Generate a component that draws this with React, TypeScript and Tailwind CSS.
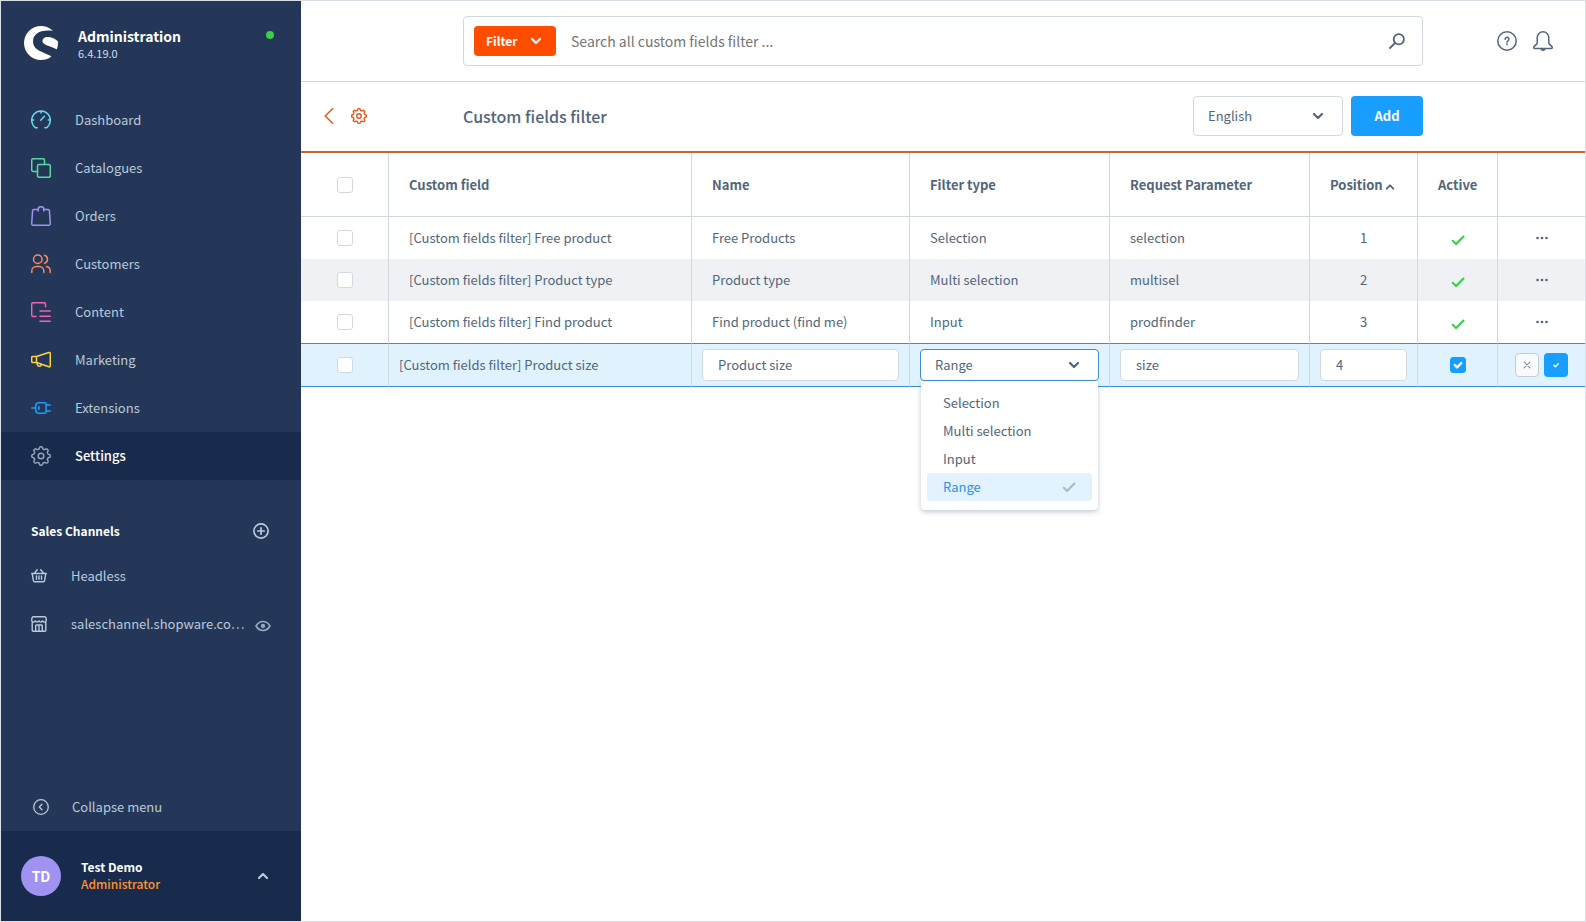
import React from 'react';
import { SiShopware } from 'react-icons/si';

type IconProps = { className?: string; children: React.ReactNode; box?: string; stroke?: number };

const Icon: React.FC<IconProps> = ({ className, children, box = '0 0 20 20', stroke = 1.5 }) => (
  <svg
    viewBox={box}
    fill="none"
    stroke="currentColor"
    strokeWidth={stroke}
    strokeLinecap="round"
    strokeLinejoin="round"
    className={className}
    aria-hidden="true"
  >
    {children}
  </svg>
);

// Cog outline with eight rounded teeth
const cogPoints = Array.from({ length: 128 }, (_, i) => {
  const angle = (i / 128) * Math.PI * 2;
  const radius = 8.2 + 1.05 * Math.tanh(2 * Math.cos(8 * angle));
  return `${(10 + radius * Math.sin(angle)).toFixed(2)},${(10 - radius * Math.cos(angle)).toFixed(2)}`;
}).join(' ');

const Gear = () => (
  <>
    <circle cx="10" cy="10" r="2.8" />
    <polygon points={cogPoints} />
  </>
);

const Chevron: React.FC<{ className?: string }> = ({ className }) => (
  <Icon box="0 0 12 12" stroke={2.2} className={className}>
    <path d="m2 4 4 4 4-4" />
  </Icon>
);

const CheckMark: React.FC<{ className?: string }> = ({ className }) => (
  <Icon box="0 0 12 12" stroke={1.8} className={className}>
    <path d="M1.500 6.700 4.300 9.500 10.700 3" />
  </Icon>
);

const navigation = [
  {
    label: 'Dashboard',
    color: 'text-[#6ed5f0]',
    icon: (
      <>
        <path d="M6.200 17.800H4.600a9.300 9.300 0 1 1 10.800 0h-1.600M10 .9v2M.9 10h1.800M17.300 10h1.800M9.700 10.200l3.800-4" />
      </>
    ),
  },
  {
    label: 'Catalogues',
    color: 'text-[#57d9a3]',
    icon: (
      <>
        <path d="M6.500 13.500H2.200A1.500 1.500 0 0 1 .7 12V2.200A1.500 1.500 0 0 1 2.200.7H12a1.500 1.500 0 0 1 1.500 1.500v4.300" />
        <rect x="6.500" y="6.500" width="12.800" height="12.800" rx="1.500" />
      </>
    ),
  },
  {
    label: 'Orders',
    color: 'text-[#a092f0]',
    icon: (
      <>
        <path d="M5.500 3.500H2.800q-1.100 0-1.200 1L.7 17.700q0 1.600 1.500 1.600h15.600q1.500 0 1.500-1.600L18.400 4.500q-.1-1-1.200-1h-2.700M7.200 5V3.500a2.800 2.800 0 0 1 5.600 0V5M5.500 3.500h1.700M12.800 3.500h1.700" />
      </>
    ),
  },
  {
    label: 'Customers',
    color: 'text-[#f88962]',
    icon: (
      <>
        <circle cx="6.800" cy="5.300" r="4.300" />
        <path d="M.8 18.500V17a4.500 4.500 0 0 1 4.500-4.500h3a4.500 4.500 0 0 1 4.500 4.500v1.500M13.500 1.200a4.300 4.300 0 0 1 0 8.200M15.500 12.500a4.500 4.500 0 0 1 3.700 4.500v1.500" />
      </>
    ),
  },
  {
    label: 'Content',
    color: 'text-[#f263b4]',
    icon: (
      <>
        <path d="M5 14.500H2.200A1.500 1.500 0 0 1 .7 13V2.200A1.500 1.500 0 0 1 2.200.7H13a1.500 1.500 0 0 1 1.500 1.500v2.500M9 9h10.300M9 14.200h10.300M9 19.200h10.300" />
      </>
    ),
  },
  {
    label: 'Marketing',
    color: 'text-[#ffd53a]',
    icon: (
      <>
        <path d="M5.500 6.500 17.800 2.500q1.500-.4 1.500 1V15.800q0 1.400-1.500 1L5.500 12.500M5.500 6.500H1.800Q.7 6.500.7 7.600v3.800q0 1.100 1.100 1.100h3.700zM6 12.800l.3 1.900a2.100 2.100 0 0 0 4.100 0l.1-.6" />
      </>
    ),
  },
  {
    label: 'Extensions',
    color: 'text-[#189eff]',
    icon: (
      <>
        <path d="M.7 10h4M7.500 4.700h6.300q1.200 0 1.200 1.200v8.200q0 1.200-1.200 1.200H7.500q-2.800-.5-2.800-3.300V8q0-2.800 2.800-3.300zM15 7h4.300M15 13h4.300M8 8.700v2.600" />
      </>
    ),
  },
  { label: 'Settings', color: 'text-[#97a3b8]', active: true, icon: <Gear /> },
];

const rows = [
  { field: '[Custom fields filter] Free product', name: 'Free Products', type: 'Selection', param: 'selection', position: 1 },
  { field: '[Custom fields filter] Product type', name: 'Product type', type: 'Multi selection', param: 'multisel', position: 2 },
  { field: '[Custom fields filter] Find product', name: 'Find product (find me)', type: 'Input', param: 'prodfinder', position: 3 },
];

const filterTypes = ['Selection', 'Multi selection', 'Input', 'Range'];

const Checkbox: React.FC<{ label: string; checked?: boolean }> = ({ label, checked }) => (
  <span className="relative mx-auto block h-4 w-4">
    <input
      type="checkbox"
      aria-label={label}
      defaultChecked={checked}
      className="peer block h-4 w-4 appearance-none rounded-[3px] border border-[#d1d9e0] bg-white checked:border-[#189eff] checked:bg-[#189eff]"
    />
    <Icon box="0 0 16 16" stroke={2.4} className="pointer-events-none absolute inset-0 h-4 w-4 text-white opacity-0 peer-checked:opacity-100">
      <path d="m4.800 8 2.300 2.300 4.200-4.300" />
    </Icon>
  </span>
);

const Sidebar = () => (
  <aside className="flex w-[300px] shrink-0 flex-col bg-[#243758] text-[#b9cadb]">
    <div className="flex items-start pt-6 pl-[23px] pr-[27px]">
      <SiShopware className="mt-px h-[34px] w-[34px] text-white" aria-hidden="true" />
      <div className="ml-5 grow">
        <div className="text-[14px] leading-[22px] font-bold text-white">Administration</div>
        <div className="text-[11px] leading-3 text-[#d5dfea]">6.4.19.0</div>
      </div>
      <span className="mt-[6px] h-2 w-2 rounded-full bg-[#37d046]" />
    </div>

    <nav className="mt-9">
      {navigation.map((item) => (
        <a
          key={item.label}
          href="#"
          className={`flex h-12 items-center pl-[30px] text-[13px] ${item.active ? 'bg-[#182b4d] font-medium text-white' : ''}`}
        >
          <Icon className={`h-5 w-5 ${item.color}`}>{item.icon}</Icon>
          <span className="ml-6">{item.label}</span>
        </a>
      ))}
    </nav>

    {/* Sales channels */}
    <div className="mt-[39px] flex h-6 items-center pl-[30px] pr-8">
      <h2 className="grow text-[12px] font-bold text-white">Sales Channels</h2>
      <button type="button" aria-label="Add sales channel">
        <Icon box="0 0 16 16" stroke={1.7} className="h-4 w-4">
          <circle cx="8" cy="8" r="7.100" />
          <path d="M8 4.800v6.400M4.800 8h6.400" />
        </Icon>
      </button>
    </div>
    <div className="mt-[9px] text-[13px]">
      <a href="#" className="flex h-12 items-center pl-[30px]">
        <Icon box="0 0 16 16" stroke={1.4} className="h-4 w-4">
          <path d="M.7 5.500h14.600M1.200 5.700l1.200 7q.2 1 1.200 1h8.800q1 0 1.200-1l1.200-7M3.300 5.200l3-3.500M12.700 5.200l-3-3.500M5.500 8v3.200M8 8v3.200M10.500 8v3.200" />
        </Icon>
        <span className="ml-6">Headless</span>
      </a>
      <div className="flex h-12 items-center pl-[30px] pr-[30px]">
        <a href="#" className="flex min-w-0 grow items-center">
          <Icon box="0 0 16 16" stroke={1.4} className="h-4 w-4 shrink-0">
            <path d="M2.500.7h11q1.200 0 1.500 1.200l.3 2.300a1.900 1.900 0 0 1-3.700.6 1.900 1.900 0 0 1-3.600 0 1.900 1.900 0 0 1-3.600 0A1.900 1.900 0 0 1 .7 4.200L1 1.900Q1.300.7 2.500.7zM1.200 6.200v8.100q0 1 1 1h11.600q1 0 1-1V6.200M4.700 15V9.800q0-.8.8-.8h5q.8 0 .8.8V15M8 9v6" />
          </Icon>
          <span className="ml-6 truncate">saleschannel.shopware.co…</span>
        </a>
        <button type="button" aria-label="Open storefront" className="mt-1 text-[#97a8c0]">
          <Icon box="0 0 16 16" stroke={1.7} className="h-4 w-4">
            <path d="M1 8q2.700-4.500 7-4.500T15 8q-2.700 4.500-7 4.500T1 8z" />
            <circle cx="8" cy="8" r="1.300" fill="currentColor" />
          </Icon>
        </button>
      </div>
    </div>

    <button type="button" className="mt-auto flex h-12 items-center pl-8 text-[13px]">
      <Icon box="0 0 16 16" stroke={1.3} className="h-4 w-4">
        <circle cx="8" cy="8" r="7.300" />
        <path d="M9 5.300 6.300 8 9 10.700" />
      </Icon>
      <span className="ml-[23px]">Collapse menu</span>
    </button>

    <div className="flex h-[90px] items-center bg-[#182b4d] pl-5 pr-8">
      <span className="flex h-10 w-10 items-center justify-center rounded-full bg-[#a092f0] text-[14px] font-bold text-white">TD</span>
      <div className="ml-5 grow pb-[2px] text-[12px] leading-[17px]">
        <div className="font-bold text-white">Test Demo</div>
        <div className="font-medium text-[#ff9429]">Administrator</div>
      </div>
      <button type="button" aria-label="User menu">
        <Chevron className="h-3 w-3 rotate-180" />
      </button>
    </div>
  </aside>
);

const SearchBar = () => (
  <header className="grid h-[81px] grid-cols-[1fr_minmax(0,960px)_1fr] items-center border-b border-[#d1d9e0]">
    <div className="col-start-2 flex h-[50px] items-center rounded border border-[#d1d9e0] pl-[10px] pr-[17px]">
      <button type="button" className="flex h-[30px] w-[82px] items-center rounded bg-[#ff4d00] pl-3 text-[12px] font-bold text-white">
        Filter
        <Chevron className="ml-[13px] h-3 w-3" />
      </button>
      <input
        type="text"
        aria-label="Search"
        placeholder="Search all custom fields filter ..."
        className="ml-[15px] h-10 grow text-[14px] outline-none placeholder:text-[#757575]"
      />
      <button type="button" aria-label="Start search" className="text-[#52667a]">
        <Icon box="0 0 16 16" stroke={1.8} className="h-4 w-4">
          <circle cx="9.800" cy="6.200" r="5.100" />
          <path d="M6 10 1 15" />
        </Icon>
      </button>
    </div>
    <div className="flex justify-end gap-4 pr-8 text-[#52667a]">
      <button type="button" aria-label="Help">
        <Icon className="h-5 w-5">
          <circle cx="10" cy="10" r="9.200" />
          <path d="M8.100 8.200a1.900 1.900 0 1 1 2.900 1.600q-1 .6-1 1.400" />
          <circle cx="10" cy="13.300" r=".3" />
        </Icon>
      </button>
      <button type="button" aria-label="Notifications">
        <Icon className="h-5 w-5">
          <path d="M10 .8a5.800 5.800 0 0 0-5.800 5.800v4.600q0 1.300-.8 2.200l-2.100 2q-.8.800-.5 1.500.2.600 1 .600h16.400q.8 0 1-.6.3-.7-.5-1.500l-2.100-2q-.8-.9-.8-2.200V6.600A5.800 5.800 0 0 0 10 .8zM8 17.600q.3 1.700 2 1.700t2-1.700" />
        </Icon>
      </button>
    </div>
  </header>
);

const TitleBar = () => (
  <div className="grid h-[71px] grid-cols-[1fr_minmax(0,960px)_1fr] items-center border-b-2 border-[#cc6434] pb-[2px]">
    <div className="flex items-center gap-4 pl-[22px] text-[#e8581c]">
      <button type="button" aria-label="Back">
        <Icon box="0 0 12 16" className="h-4 w-3">
          <path d="M9.500.7 2.200 8l7.300 7.300" />
        </Icon>
      </button>
      <a href="#" aria-label="Settings">
        <Icon stroke={1.8} className="h-4 w-4">
          <Gear />
        </Icon>
      </a>
    </div>
    <div className="flex items-center gap-2">
      <h1 className="grow text-[16px] font-medium">Custom fields filter</h1>
      <div className="relative">
        <select aria-label="Language" className="h-10 w-[150px] appearance-none rounded border border-[#d1d9e0] bg-white pl-[14px] text-[13px]">
          <option>English</option>
        </select>
        <Chevron className="pointer-events-none absolute top-[14px] right-[19px] h-3 w-3" />
      </div>
      <button type="button" className="h-10 w-[72px] rounded bg-[#189eff] text-[13px] font-bold text-white">
        Add
      </button>
    </div>
  </div>
);

const cell = 'border-r border-[#d1d9e0] px-5';
const editCell = 'border-r border-[#d1d9e0] px-[10px]';
const editInput = 'block h-8 w-full rounded border border-[#d1d9e0] bg-white px-[15px] pb-[2px]';

const FilterTypeSelect = () => (
  <div className="relative">
    <select
      aria-label="Filter type"
      defaultValue="Range"
      className="block h-8 w-full appearance-none rounded border border-[#3c8fcf] bg-white px-[14px] outline-none"
    >
      {filterTypes.map((type) => (
        <option key={type}>{type}</option>
      ))}
    </select>
    <Chevron className="pointer-events-none absolute top-[10px] right-[19px] h-3 w-3" />
    <ul role="listbox" aria-label="Filter types" className="absolute inset-x-px top-8 z-10 rounded-b bg-white px-[6px] pt-2 pb-[9px] shadow-[0_2px_5px_rgba(82,102,122,0.35)]">
      {filterTypes.map((type) => (
        <li
          key={type}
          role="option"
          aria-selected={type === 'Range'}
          className={`flex h-7 items-center justify-between rounded px-4 ${type === 'Range' ? 'bg-[#e2f3ff] text-[#2f8fe8]' : ''}`}
        >
          {type}
          {type === 'Range' && <CheckMark className="h-[14px] w-[14px] text-[#a9bac6]" />}
        </li>
      ))}
    </ul>
  </div>
);

const FilterTable = () => (
  <table className="w-full table-fixed border-separate border-spacing-0 text-[13px]">
    <colgroup>
      <col className="w-[88px]" />
      <col />
      <col className="w-[218px]" />
      <col className="w-[200px]" />
      <col className="w-[200px]" />
      <col className="w-[108px]" />
      <col className="w-[80px]" />
      <col className="w-[87px]" />
    </colgroup>
    <thead>
      <tr className="h-16 text-left [&>th]:border-b">
        <th className={cell}><Checkbox label="Select all" /></th>
        <th className={cell}>Custom field</th>
        <th className={cell}>Name</th>
        <th className={cell}>Filter type</th>
        <th className={cell}>Request Parameter</th>
        <th className={cell}>
          <span className="flex items-center gap-[2px]">
            Position
            <Chevron className="mt-1 h-[10px] w-[10px] rotate-180" />
          </span>
        </th>
        <th className={cell}>Active</th>
        <th className="border-[#d1d9e0]" aria-label="Actions"></th>
      </tr>
    </thead>
    <tbody>
      {rows.map((row) => (
        <tr key={row.position} className="h-[42px] even:bg-[#f0f1f4]">
          <td className={cell}><Checkbox label={`Select ${row.name}`} /></td>
          <td className={cell}>{row.field}</td>
          <td className={cell}>{row.name}</td>
          <td className={cell}>{row.type}</td>
          <td className={cell}>{row.param}</td>
          <td className={`${cell} text-center`}>{row.position}</td>
          <td className={cell}>
            <CheckMark className="mx-auto mt-1 h-[14px] w-[14px] text-[#37d046]" />
          </td>
          <td className="text-center">
            <button type="button" aria-label="Row actions" className="block mx-auto">
              <svg viewBox="0 0 12 4" className="h-1 w-3" fill="currentColor" aria-hidden="true">
                <circle cx="1.500" cy="2" r="1.300" />
                <circle cx="6" cy="2" r="1.300" />
                <circle cx="10.500" cy="2" r="1.300" />
              </svg>
            </button>
          </td>
        </tr>
      ))}

      {/* Inline edit row */}
      <tr className="h-[44px] bg-[#e1f2ff] [&>td]:border-y [&>td]:border-y-[#3c8fcf]">
        <td className={cell}><Checkbox label="Select Product size" /></td>
        <td className={editCell}>[Custom fields filter] Product size</td>
        <td className={editCell}><input aria-label="Name" defaultValue="Product size" className={editInput} /></td>
        <td className={editCell}><FilterTypeSelect /></td>
        <td className={editCell}><input aria-label="Request parameter" defaultValue="size" className={editInput} /></td>
        <td className={editCell}><input aria-label="Position" defaultValue="4" className={editInput} /></td>
        <td className={editCell}><Checkbox label="Active" checked /></td>
        <td>
          <div className="flex justify-center gap-[5px]">
            <button type="button" aria-label="Cancel" className="flex h-6 w-6 items-center justify-center rounded border border-[#c3cdd6] bg-[#f9fafb] text-[#8796a5]">
              <Icon box="0 0 8 8" stroke={1.2} className="h-2 w-2">
                <path d="m1.200 1.200 5.600 5.600M6.800 1.200 1.200 6.800" />
              </Icon>
            </button>
            <button type="button" aria-label="Save" className="flex h-6 w-6 items-center justify-center rounded bg-[#189eff] text-white">
              <Icon box="0 0 8 8" stroke={1.500} className="h-2 w-2">
                <path d="M1.800 4.300 3.300 5.700 6.300 2.700" />
              </Icon>
            </button>
          </div>
        </td>
      </tr>
    </tbody>
  </table>
);

export default function App() {
  return (
    <div className="flex min-h-screen border border-[#d8dfe6] bg-white font-['Noto_Sans_CJK_JP','Noto_Sans',sans-serif] text-[#52667a]">
      <Sidebar />
      <main className="min-w-0 grow">
        <SearchBar />
        <TitleBar />
        <FilterTable />
      </main>
    </div>
  );
}
